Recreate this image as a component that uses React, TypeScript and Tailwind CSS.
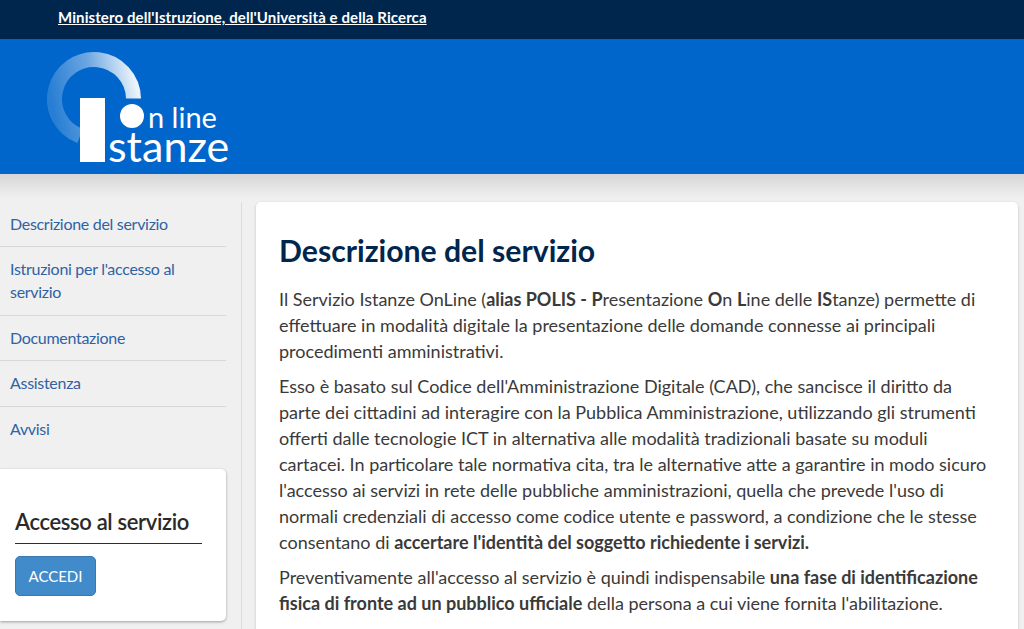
export default function App() {
  const nav = [
    { t: "Descrizione del servizio", c: "pt-[10px] pb-[11px]" },
    { t: "Istruzioni per l'accesso al servizio", c: "pt-[10px] pb-[12px]" },
    { t: "Documentazione", c: "pt-[10px] pb-[11px]" },
    { t: "Assistenza", c: "pt-[10px] pb-[12px]" },
    { t: "Avvisi", c: "pt-[10px] pb-[11px]" },
  ];
  return (
    <div className="h-[629px] w-[1024px] overflow-hidden bg-[#f0f0f0] font-['Lato',sans-serif] text-[#3a3a3a]">
      <div className="flex h-[39px] items-center bg-[#00264d] pb-[4px] pl-[58px]">
        <a className="text-[15px] font-bold tracking-[0.1px] text-white underline">Ministero dell'Istruzione, dell'Università e della Ricerca</a>
      </div>
      <div className="h-[135px] bg-[#0066cc] pl-[46px] pt-[12px]">
        <svg width="190" height="123" viewBox="0 0 190 123" className="block">
          <defs>
            <linearGradient id="ring" gradientUnits="userSpaceOnUse" x1="92" y1="45" x2="8" y2="62">
              <stop offset="0" stopColor="#ffffff" stopOpacity="0.92" />
              <stop offset="0.5" stopColor="#ffffff" stopOpacity="0.42" />
              <stop offset="1" stopColor="#ffffff" stopOpacity="0.16" />
            </linearGradient>
          </defs>
          <path d="M34 85 A39.5 39.5 0 1 1 87.5 47.5" fill="none" stroke="url(#ring)" strokeWidth="15" />
          <rect x="34" y="47" width="25" height="64" fill="#fff" />
          <circle cx="86" cy="65" r="12" fill="#fff" />
          <text x="102" y="77" fill="#fff" fontSize="29" fontFamily="Lato, sans-serif">n line</text>
          <text x="62" y="111" fill="#fff" fontSize="43" fontFamily="Lato, sans-serif">stanze</text>
        </svg>
      </div>
      <div className="flex h-[455px] bg-[linear-gradient(#d6d6d6,#f0f0f0_24px)] pt-[28px]">
        <aside className="mr-[14px] h-full w-[242px] border-r border-[#dcdcdc] pr-[15px]">
          <nav className="text-[16px] leading-[23px] tracking-[-0.3px] text-[#2f62a5]">
            {nav.map((n) => (
              <div key={n.t} className={`border-b border-[#d8d8d8] pl-[10px] pr-[30px] last:border-b-0 ${n.c}`}>{n.t}</div>
            ))}
          </nav>
          <div className="mt-[18px] h-[152px] rounded-r-[5px] bg-white pl-[15px] pr-[24px] pt-[38px] shadow-[0_1px_3px_rgba(0,0,0,0.35)]">
            <h2 className="border-b border-[#17324d] pb-[6px] text-[22px] font-semibold leading-[30px] tracking-[-0.35px] text-[#2a2a2a]">Accesso al servizio</h2>
            <button className="mt-[12px] h-[40px] w-[81px] rounded-[5px] border border-[#3a78b0] bg-[#428bca] text-[15px] text-white">ACCEDI</button>
          </div>
        </aside>
        <main className="mr-[6px] h-[500px] w-[762px] rounded-[5px] bg-white pl-[23px] pt-[28px] shadow-[0_1px_3px_rgba(0,0,0,0.2)]">
          <h1 className="mb-[16px] text-[30.2px] font-bold leading-[40px] text-[#00264d]">Descrizione del servizio</h1>
          <div className="whitespace-nowrap text-[18px] leading-[26px]">
            <p className="mb-[9px]">Il Servizio Istanze OnLine (<b>alias POLIS - P</b>resentazione <b>O</b>n <b>L</b>ine delle <b>IS</b>tanze) permette di<br />effettuare in modalità digitale la presentazione delle domande connesse ai principali<br />procedimenti amministrativi.</p>
            <p className="mb-[9px]">Esso è basato sul Codice dell'Amministrazione Digitale (CAD), che sancisce il diritto da<br />parte dei cittadini ad interagire con la Pubblica Amministrazione, utilizzando gli strumenti<br />offerti dalle tecnologie ICT in alternativa alle modalità tradizionali basate su moduli<br />cartacei. In particolare tale normativa cita, tra le alternative atte a garantire in modo sicuro<br />l'accesso ai servizi in rete delle pubbliche amministrazioni, quella che prevede l'uso di<br />normali credenziali di accesso come codice utente e password, a condizione che le stesse<br />consentano di <b>accertare l'identità del soggetto richiedente i servizi.</b></p>
            <p>Preventivamente all'accesso al servizio è quindi indispensabile <b>una fase di identificazione<br />fisica di fronte ad un pubblico ufficiale</b> della persona a cui viene fornita l'abilitazione.</p>
          </div>
        </main>
      </div>
    </div>
  );
}
